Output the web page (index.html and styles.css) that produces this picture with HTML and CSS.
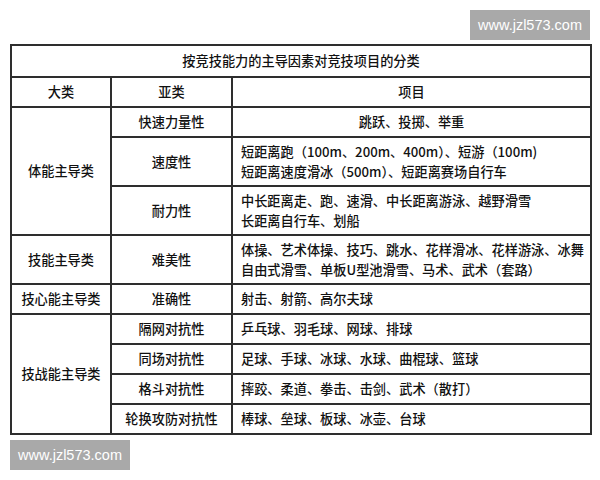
FILE: index.html
```html
<!DOCTYPE html>
<html lang="zh">
<head>
<meta charset="utf-8">
<link rel="stylesheet" href="styles.css">
</head>
<body>
<div class="page">
  <div class="top-bar"><div class="mark">www.jzl573.com</div></div>
  <table class="grid">
    <colgroup><col class="c1"><col class="c2"><col class="c3"></colgroup>
    <tr class="r-title"><td colspan="3" class="center">按竞技能力的主导因素对竞技项目的分类</td></tr>
    <tr class="r1"><td class="center">大类</td><td class="center">亚类</td><td class="center">项目</td></tr>
    <tr class="r1"><td rowspan="3" class="center">体能主导类</td><td class="center">快速力量性</td><td class="center">跳跃、投掷、举重</td></tr>
    <tr class="r2"><td class="center">速度性</td><td class="item">短距离跑（100m、200m、400m）、短游（100m)<br>短距离速度滑冰（500m）、短距离赛场自行车</td></tr>
    <tr class="r2"><td class="center">耐力性</td><td class="item">中长距离走、跑、速滑、中长距离游泳、越野滑雪<br>长距离自行车、划船</td></tr>
    <tr class="r2"><td class="center">技能主导类</td><td class="center">难美性</td><td class="item">体操、艺术体操、技巧、跳水、花样滑冰、花样游泳、冰舞<br>自由式滑雪、单板U型池滑雪、马术、武术（套路）</td></tr>
    <tr class="r1"><td class="center">技心能主导类</td><td class="center">准确性</td><td class="item">射击、射箭、高尔夫球</td></tr>
    <tr class="r1"><td rowspan="4" class="center">技战能主导类</td><td class="center">隔网对抗性</td><td class="item">乒乓球、羽毛球、网球、排球</td></tr>
    <tr class="r1"><td class="center">同场对抗性</td><td class="item">足球、手球、冰球、水球、曲棍球、篮球</td></tr>
    <tr class="r1"><td class="center">格斗对抗性</td><td class="item">摔跤、柔道、拳击、击剑、武术（散打）</td></tr>
    <tr class="r1"><td class="center">轮换攻防对抗性</td><td class="item">棒球、垒球、板球、冰壶、台球</td></tr>
  </table>
  <div class="bottom-bar"><div class="mark">www.jzl573.com</div></div>
</div>
</body>
</html>
```

FILE: styles.css
```css
html, body {
  margin: 0;
  padding: 0;
  background: #ffffff;
}
.page {
  width: 580px;
  padding: 10px 10px 0 10px;
  display: flex;
  flex-direction: column;
}
.top-bar {
  display: flex;
  justify-content: flex-end;
  height: 30px;
  margin-bottom: 4px;
}
.bottom-bar {
  display: flex;
  justify-content: flex-start;
  margin-top: 5px;
}
.mark {
  width: 120px;
  height: 30px;
  background: #a9a9a9;
  color: #ffffff;
  font-family: "Liberation Sans", Arial, sans-serif;
  font-size: 14.5px;
  line-height: 30px;
  text-align: center;
}
.grid {
  width: 580px;
  border-collapse: collapse;
  table-layout: fixed;
  font-family: "Noto Sans CJK SC", "Noto Sans", sans-serif;
  font-size: 13.2px;
  font-weight: 500;
  color: #111111;
  border: 2px solid #2e2e2e;
}
.c1 { width: 100px; }
.c2 { width: 121px; }
.c3 { width: 359px; }
.grid td {
  border: 2px solid #2e2e2e;
  padding: 0;
  line-height: 20px;
}
.r-title td { height: 30px; }
.r1 td { height: 28px; }
.r2 td { height: 47px; }
.center { text-align: center; }
.item { text-align: left; padding-left: 8px !important; }
```
